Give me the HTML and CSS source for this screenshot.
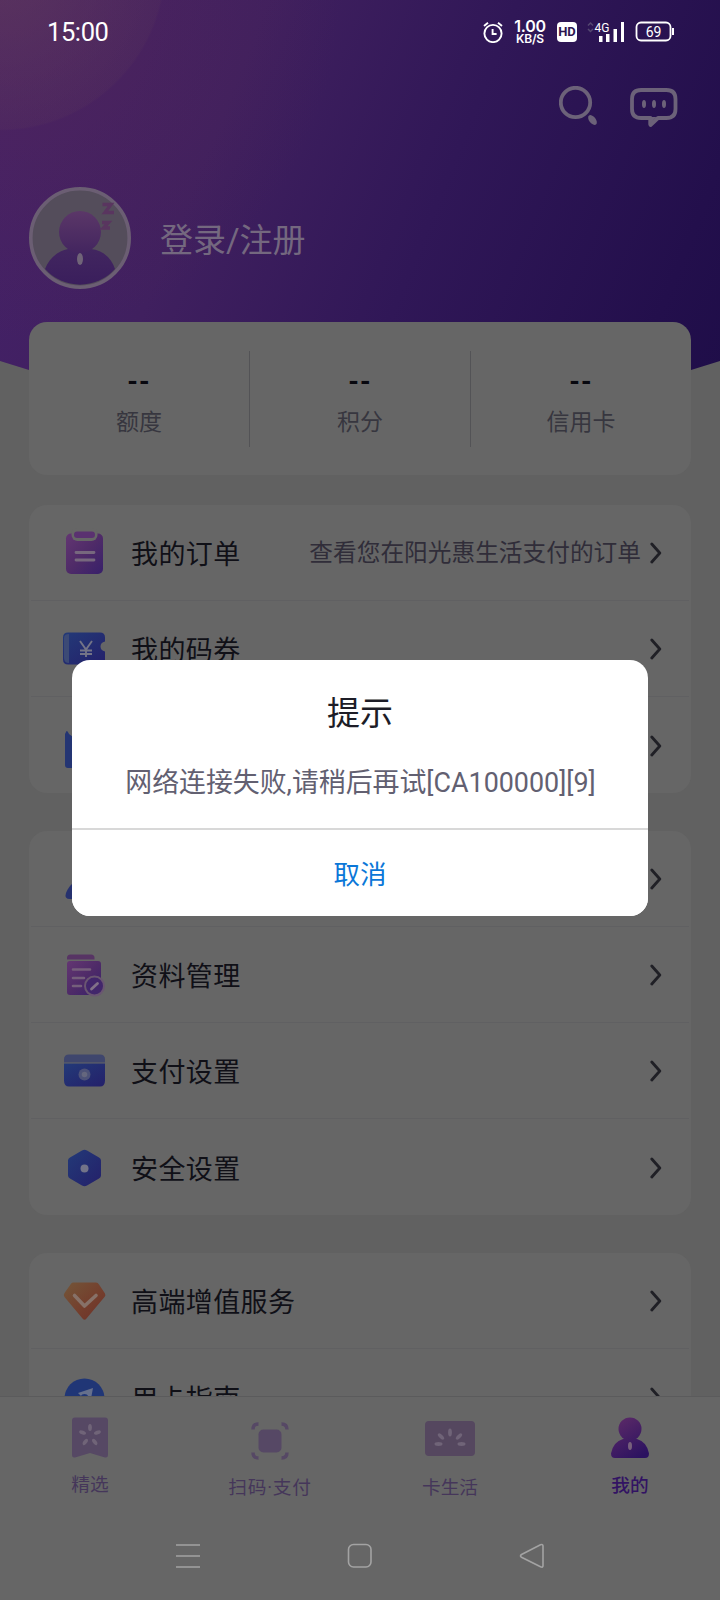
FILE: index.html
```html
<!DOCTYPE html>
<html lang="zh-CN">
<head>
<meta charset="utf-8">
<title>我的</title>
<link rel="stylesheet" href="styles.css">
</head>
<body>
<svg class="defs" width="0" height="0">
  <defs>
    <linearGradient id="purple" x1="0" y1="0" x2="1" y2="1"><stop offset="0" stop-color="#633672"/><stop offset=".5" stop-color="#4f2b68"/><stop offset="1" stop-color="#38206a"/></linearGradient>
    <linearGradient id="blue" x1="0" y1="0" x2="1" y2="1"><stop offset="0" stop-color="#233a78"/><stop offset="1" stop-color="#24206a"/></linearGradient>
    <linearGradient id="orange" x1="0" y1="0" x2="1" y2="1"><stop offset="0" stop-color="#735639"/><stop offset=".55" stop-color="#743f2d"/><stop offset="1" stop-color="#6d3028"/></linearGradient>
    <linearGradient id="head" x1="0" y1="0" x2="0" y2="1"><stop offset="0" stop-color="#5b3768"/><stop offset="1" stop-color="#43255f"/></linearGradient>
    <linearGradient id="body" x1="0" y1="0" x2="0" y2="1"><stop offset="0" stop-color="#422660"/><stop offset="1" stop-color="#3a1e5c"/></linearGradient>
    <linearGradient id="me" gradientUnits="userSpaceOnUse" x1="4" y1="0" x2="30" y2="40"><stop offset="0" stop-color="#5e2b68"/><stop offset="1" stop-color="#2b1260"/></linearGradient>
    <symbol id="chev" viewBox="0 0 12 22"><path d="M1.8 2 9.8 11 1.8 20" fill="none" stroke="#202026" stroke-width="2.8" stroke-linecap="round" stroke-linejoin="round"/></symbol>
  </defs>
</svg>
<div class="screen">
  <main class="content">
    <div class="hero"></div>
    <header class="status">
      <span class="clock">15:00</span>
      <div class="status-right">
        <svg class="alarm" width="20" height="22" viewBox="0 0 20 22" fill="none" stroke="#fff" stroke-width="1.9"><circle cx="10" cy="12.500" r="8.600"/><path d="M9.600 8v5h4M1 5 5 1.700M19 5 15 1.700"/></svg>
        <div class="speed"><b>1.00</b><b class="unit">KB/S</b></div>
        <span class="hd">HD</span>
        <svg class="signal" width="38" height="22" viewBox="0 0 38 22"><path d="M1 4.500 3.500 2 6 4.500M1 8 3.500 10.500 6 8" fill="none" stroke="#554871" stroke-width="1.500"/><text x="7.500" y="10.500" class="net">4G</text><path d="M12 15h3.500v6H12zM19 13h3.500v8H19zM26.500 8H30v13h-3.500zM34 1h3v20h-3z" fill="#fff"/></svg>
        <svg class="battery" width="40" height="22" viewBox="0 0 40 22"><rect x="1.500" y="1.500" width="34" height="18" rx="4.500" fill="none" stroke="#fff" stroke-width="1.800"/><path d="M37 7h2v7h-2z" fill="#fff"/><text x="18.500" y="15.500" text-anchor="middle" class="level">69</text></svg>
      </div>
    </header>
    <div class="tools">
      <svg width="40" height="42" viewBox="0 0 40 42"><circle cx="16.500" cy="16.500" r="14.700" fill="none" stroke="#6c6279" stroke-width="3.800"/><ellipse cx="33.500" cy="34" rx="3.300" ry="5.700" transform="rotate(-38 33.500 34)" fill="#6c6279"/></svg>
      <svg width="50" height="42" viewBox="0 0 50 42"><path d="M12 4h25.500q9 0 9 9v10q0 9-9 9H29l-7.500 7v-7H12q-9 0-9-9V13q0-9 9-9z" fill="none" stroke="#6c6279" stroke-width="3.800" stroke-linejoin="round"/><path d="M19.500 31h8l-8 8z" fill="#6c6279"/><g fill="#6c6279"><ellipse cx="15" cy="18" rx="2" ry="4"/><ellipse cx="25" cy="18" rx="2" ry="4"/><ellipse cx="35" cy="18" rx="2" ry="4"/></g></svg>
    </div>
    <section class="profile">
      <svg width="102" height="102" viewBox="0 0 102 102"><circle cx="51" cy="51" r="49.200" fill="#544d5b" stroke="#6b5e73" stroke-width="3.600"/><path d="M16 82C20 71 29 64 39 62L62 62C74 63 83 72 86 82A47 47 0 0 1 16 82z" fill="url(#body)"/><circle cx="51" cy="45" r="21" fill="url(#head)"/><ellipse cx="51" cy="72" rx="3" ry="6" fill="#706478"/><path d="M73.500 17.500H82L76 25.500H85M73 35.500h6.500L74.500 41h6.500" fill="none" stroke="#59355f" stroke-width="3.400"/></svg>
      <h1 class="login">登录/注册</h1>
    </section>
    <section class="stats card">
      <div class="stat"><b class="dash">--</b><span>额度</span></div>
      <div class="stat"><b class="dash">--</b><span>积分</span></div>
      <div class="stat"><b class="dash">--</b><span>信用卡</span></div>
    </section>
    <section class="card group orders">
      <div class="row">
        <svg class="icon" viewBox="0 0 44 44"><rect x="5" y="2.500" width="37" height="40.500" rx="5" fill="url(#purple)"/><rect x="10.500" y="-3" width="26" height="13" rx="6" fill="#666"/><rect x="13" y=".5" width="21" height="6.500" rx="3.200" fill="#5a3170"/><path d="M15 21.500h18M15 29h18" stroke="#77687e" stroke-width="2.800" stroke-linecap="round"/></svg>
        <span class="label">我的订单</span><span class="note">查看您在阳光惠生活支付的订单</span><svg class="chev"><use href="#chev"/></svg>
      </div>
      <div class="row">
        <svg class="icon" viewBox="0 0 44 44"><path d="M6 5.500h32q5 0 5 5v4q-4.500 1-4.500 5t4.500 5v8q0 5-5 5H6q-5 0-5-5v-22q0-5 5-5z" fill="url(#blue)"/><path d="M7 7q-5 0-5 4v20q0 5 5 5z" fill="#3c4a75"/><path d="m18 14 6 8.500 6-8.500M24 22v8M18 23.500h12M18 27h12" fill="none" stroke="#747487" stroke-width="1.900"/></svg>
        <span class="label">我的码券</span><svg class="chev"><use href="#chev"/></svg>
      </div>
      <div class="row">
        <svg class="icon" viewBox="0 0 44 44"><path d="M4 8q1-3 3 2l4 3h29v28q0 3-3 3H6q-3 0-3-3V10z" fill="#243573"/></svg>
        <svg class="chev"><use href="#chev"/></svg>
      </div>
    </section>
    <section class="card group">
      <div class="row">
        <svg class="icon" viewBox="0 0 44 44"><circle cx="22" cy="13" r="11" fill="url(#blue)"/><path d="M8 42q-6 0-4-6 5-13 18-13t18 13q2 6-4 6z" fill="#26316e"/></svg>
        <svg class="chev"><use href="#chev"/></svg>
      </div>
      <div class="row">
        <svg class="icon" viewBox="0 0 44 44"><path d="M5 6.500V5q0-3.500 3.500-3.500H29q3.500 0 3.500 3.500v1.500z" fill="#573464"/><rect x="5" y="8" width="34" height="34" rx="3" fill="url(#purple)"/><path d="M11 16.500h17M11 25h11M11 33h8" stroke="#755f7b" stroke-width="2.600" stroke-linecap="round"/><circle cx="32.500" cy="33" r="9.500" fill="#42266b" stroke="#6a5671" stroke-width="2"/><path d="m29.500 36 6-5.500" stroke="#817188" stroke-width="2.800" stroke-linecap="round"/></svg>
        <span class="label">资料管理</span><svg class="chev"><use href="#chev"/></svg>
      </div>
      <div class="row">
        <svg class="icon" viewBox="0 0 44 44"><path d="M2 13.500V10.500q0-5 5-5h31q5 0 5 5v3z" fill="#3f466d"/><path d="M2 14.500h41v17q0 6-5 6H7q-5 0-5-6z" fill="url(#blue)"/><circle cx="22.500" cy="25.500" r="6" fill="#4d5278"/><circle cx="22.500" cy="25.500" r="2.800" fill="#65677e"/></svg>
        <span class="label">支付设置</span><svg class="chev"><use href="#chev"/></svg>
      </div>
      <div class="row">
        <svg class="icon" viewBox="0 0 44 44"><path d="M20 4.500q2.500-1.500 5 0L37 11.500q2 1 2 3v15q0 2-2 3L25 39.500q-2.500 1.500-5 0L8 32.500q-2-1-2-3v-15q0-2 2-3z" fill="url(#blue)"/><circle cx="22.500" cy="22.500" r="4" fill="#737489"/></svg>
        <span class="label">安全设置</span><svg class="chev"><use href="#chev"/></svg>
      </div>
    </section>
    <section class="card group">
      <div class="row">
        <svg class="icon" viewBox="0 0 44 44"><path d="M11 3.500h23q2 0 3 2l6 9q1 2-.5 3.500L24.500 39.500q-2 2.500-4 0L2.500 18q-1.500-2 0-4l6-8.500q1-2 2.500-2z" fill="url(#orange)"/><path d="m12.500 16.500 10 10.500L34 16.500" fill="none" stroke="#877168" stroke-width="3.600" stroke-linecap="round" stroke-linejoin="round"/></svg>
        <span class="label">高端增值服务</span><svg class="chev"><use href="#chev"/></svg>
      </div>
      <div class="row">
        <svg class="icon" viewBox="0 0 44 44"><circle cx="22.500" cy="22.500" r="20" fill="#203676"/><path d="M31 12 28 28 22 23 16 17z" fill="#66708c"/><circle cx="22.500" cy="22" r="4" fill="#203676"/></svg>
        <span class="label">用卡指南</span><svg class="chev"><use href="#chev"/></svg>
      </div>
    </section>
  </main>
  <nav class="tabs">
    <div class="tab">
      <svg width="38" height="42" viewBox="0 0 38 42"><path d="M4 .5h30q3 0 3 3V38q0 3-3 2.500L19 36 4 40.500Q1 41 1 38V3.500q0-3 3-3z" fill="#564864"/><g fill="#706478"><ellipse cx="19" cy="10.500" rx="1.900" ry="3.600"/><ellipse cx="19" cy="10.500" rx="1.900" ry="3.600" transform="rotate(68 19 18.500)"/><ellipse cx="19" cy="10.500" rx="1.900" ry="3.600" transform="rotate(-68 19 18.500)"/><ellipse cx="19" cy="10.500" rx="1.900" ry="3.600" transform="rotate(144 19 18.500)"/><ellipse cx="19" cy="10.500" rx="1.900" ry="3.600" transform="rotate(-144 19 18.500)"/></g></svg>
      <span>精选</span>
    </div>
    <div class="tab low">
      <svg width="38" height="38" viewBox="0 0 38 38"><rect x="7.500" y="7.500" width="23" height="23" rx="5" fill="#564865"/><path d="M2 7.500Q2 2 7.500 2M30.500 2Q36 2 36 7.500M36 30.500Q36 36 30.500 36M7.500 36Q2 36 2 30.500" fill="none" stroke="#564865" stroke-width="3.400"/></svg>
      <span class="scan">扫码·支付</span>
    </div>
    <div class="tab low card-life">
      <svg width="50" height="36" viewBox="0 0 50 36"><rect width="50" height="35" rx="4" fill="#55475f"/><g fill="#706478"><ellipse cx="25" cy="11.500" rx="1.900" ry="4"/><ellipse cx="16" cy="15.500" rx="1.900" ry="4" transform="rotate(-45 16 15.500)"/><ellipse cx="34" cy="15.500" rx="1.900" ry="4" transform="rotate(45 34 15.500)"/><ellipse cx="13.500" cy="23" rx="4" ry="1.900"/><ellipse cx="36.500" cy="23" rx="4" ry="1.900"/></g></svg>
      <span>卡生活</span>
    </div>
    <div class="tab active">
      <svg width="38" height="42" viewBox="0 0 38 42"><path d="M12 22h14Q36 25 38 36.500 38 41 34 41H4Q0 41 0 36.500 2 25 12 22z" fill="url(#me)"/><circle cx="19" cy="12" r="11.500" fill="url(#me)"/><ellipse cx="19" cy="29" rx="2" ry="4" fill="#77607c"/></svg>
      <span>我的</span>
    </div>
  </nav>
  <footer class="system">
    <svg width="26" height="26" viewBox="0 0 26 26"><path d="M1 2h24M1 13h24M1 24h24"/></svg>
    <svg width="26" height="26" viewBox="0 0 26 26"><rect x="1.500" y="1.500" width="22.500" height="22.500" rx="5"/></svg>
    <svg width="26" height="26" viewBox="0 0 26 26"><path d="M2.500 11.500 21.500 1.800Q24 1 24 3V22.500Q24 25 21.500 23.800L2.500 14.200Q.5 13 2.500 11.500z"/></svg>
  </footer>
  <div class="overlay">
    <div class="dialog" role="dialog">
      <h2>提示</h2>
      <p>网络连接失败,请稍后再试[CA100000][9]</p>
      <button class="cancel">取消</button>
    </div>
  </div>
</div>
</body>
</html>
```
FILE: styles.css
```css
* { box-sizing: border-box; margin: 0; padding: 0; }
body { font-family: Roboto, "Noto Sans CJK SC", sans-serif; background: #616161; }
svg { display: block; flex: none; }
.defs { position: absolute; }
.screen { position: relative; width: 720px; height: 1600px; display: flex; flex-direction: column; overflow: hidden; background: #616161; }
.content { position: relative; height: 1396px; flex: none; overflow: hidden; padding: 0 29px; }
.content > * { position: relative; }
.content > .hero {
  position: absolute; inset: 0 0 auto; height: 430px;
  clip-path: polygon(0 0, 100% 0, 100% 361px, 691px 370px, 360px 420px, 29px 370px, 0 361px);
  background:
    radial-gradient(circle at 0 -35px, rgba(104, 72, 96, .42) 0, rgba(100, 68, 90, .13) 164px, transparent 166px),
    radial-gradient(circle at 0 0, rgba(90, 40, 80, .45) 0, rgba(90, 40, 80, 0) 340px),
    linear-gradient(112deg, #45216a 0%, #40205f 30%, #301757 58%, #230f4c 88%, #1e0d48 100%);
}

.status { height: 64px; display: flex; justify-content: space-between; align-items: center; padding: 0 16px 0 18px; color: #fff; }
.clock { font-size: 25.500px; letter-spacing: -.4px; }
.status-right { display: flex; align-items: center; }
.speed { width: 34px; margin-left: 10px; display: flex; flex-direction: column; align-items: center; font-family: Inter, sans-serif; font-size: 16px; line-height: 14px; letter-spacing: -.2px; }
.speed b { font-weight: 600; }
.speed .unit { font-size: 12px; line-height: 12px; }
.hd { width: 20px; height: 20px; margin-left: 10px; border-radius: 4px; background: #fff; color: #2d1650; font: 700 13px/20px Roboto, sans-serif; text-align: center; }
.signal { margin-left: 10px; }
.battery { margin-left: 10px; }
.net { font: 12px Roboto, sans-serif; fill: #fff; }
.level { font: 14px Roboto, sans-serif; fill: #fff; }

.tools { height: 106px; padding: 22px 12px 0 0; display: flex; justify-content: flex-end; gap: 30px; }
.profile { height: 152px; padding-top: 17px; display: flex; align-items: flex-start; gap: 29px; }
.login { padding-top: 30px; font-size: 33px; line-height: 48px; font-weight: 400; color: #74687f; }

.card { background: #666; border-radius: 18px; }
.stats { height: 153px; display: flex; align-items: center; }
.stat { flex: 1; height: 96px; display: flex; flex-direction: column; align-items: center; border-left: 1px solid #535356; font-size: 23px; line-height: 34px; color: #37363f; }
.stat:first-child { border-left: 0; }
.dash { height: 55px; padding-top: 4px; font-size: 27px; line-height: 54px; letter-spacing: 1px; color: #08080f; }

.group { margin-top: 38px; padding: 0 2px; }
.group.orders { margin-top: 30px; }
.row { height: 96px; display: flex; align-items: center; padding: 1px 27px 0 31px; border-bottom: 1px solid #606062; }
.row:last-child { border-bottom: 0; }
.icon { width: 44px; height: 44px; margin-right: 25px; overflow: visible; }
.orders .row:first-child .icon { margin-left: -1px; margin-right: 26px; }
.label { padding-bottom: 1px; font-size: 27px; letter-spacing: .4px; color: #101017; }
.note { margin-left: auto; margin-right: 9px; font-size: 23.700px; line-height: 34px; color: #302d39; }
.chev { width: 12px; height: 22px; margin-left: auto; }
.note + .chev { margin-left: 0; }

.tabs { height: 116px; flex: none; display: flex; background: #666; border-top: 1px solid #5b5b5c; }
.tab { flex: 1; padding-top: 20px; display: flex; flex-direction: column; align-items: center; gap: 13px; font-size: 18.700px; line-height: 27px; color: #45365a; }
.tab.low { padding-top: 25px; gap: 15px; }
.scan { letter-spacing: .8px; }
.card-life svg { height: 36px; margin: -1px 0 3px; }
.active { color: #321363; gap: 14px; }
.active span { font-weight: 500; }
.system { flex: 1; background: #666; display: flex; justify-content: center; gap: 146px; padding-top: 31px; }
.system svg { fill: none; stroke: #a3a3a3; stroke-width: 1.600; }

.overlay { position: absolute; inset: 0; display: flex; justify-content: center; align-items: flex-start; padding-top: 660px; }
.dialog { width: 576px; height: 256px; background: #fff; border-radius: 18px; overflow: hidden; display: flex; flex-direction: column; text-align: center; }
.dialog h2 { padding-top: 30px; font-size: 33px; line-height: 48px; font-weight: 400; color: #1d1d27; }
.dialog p { height: 90px; padding: 25px 0 0 1px; font-size: 26.900px; line-height: 40px; color: #626071; white-space: nowrap; }
.cancel { flex: 1; border: 0; border-top: 2px solid #d8d8d8; background: #fff; font: 26.500px "Noto Sans CJK SC", sans-serif; color: #0b77d8; padding-bottom: 2px; }
```
